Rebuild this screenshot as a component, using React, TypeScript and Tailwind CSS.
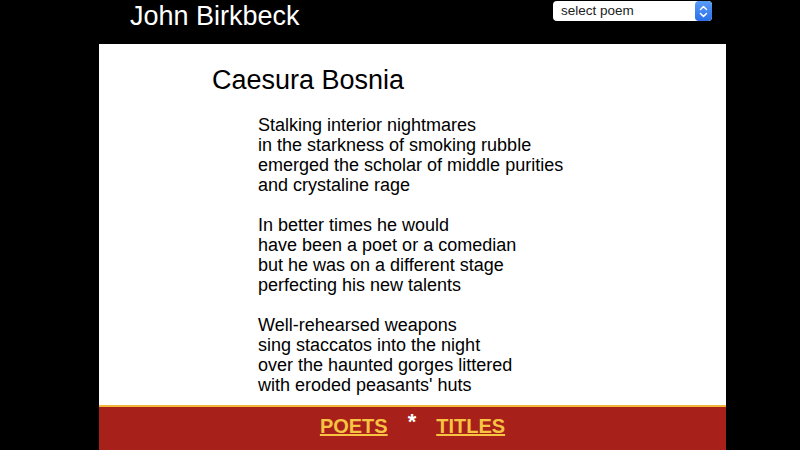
const STANZAS = [
  [
    "Stalking interior nightmares",
    "in the starkness of smoking rubble",
    "emerged the scholar of middle purities",
    "and crystaline rage",
  ],
  [
    "In better times he would",
    "have been a poet or a comedian",
    "but he was on a different stage",
    "perfecting his new talents",
  ],
  [
    "Well-rehearsed weapons",
    "sing staccatos into the night",
    "over the haunted gorges littered",
    "with eroded peasants' huts",
  ],
];

function PoemSelect() {
  return (
    <div className="flex h-5 w-[159px] items-stretch overflow-hidden rounded-[4px] bg-white">
      <span className="flex-1 pl-2 text-[13.5px] leading-5 text-[#222]">select poem</span>
      <span className="flex w-[17px] items-center justify-center rounded-[4px] bg-gradient-to-b from-[#5a9cf8] to-[#2a6fe8]">
        <svg width="9" height="13" viewBox="0 0 9 13" fill="none" stroke="white" strokeWidth="1.5" strokeLinecap="round" strokeLinejoin="round">
          <path d="M1.5 4.5 4.5 1.5 7.5 4.5" />
          <path d="M1.5 8.5 4.5 11.5 7.5 8.5" />
        </svg>
      </span>
    </div>
  );
}

export default function App() {
  return (
    <div className="h-[450px] overflow-hidden bg-black font-['Liberation_Sans',Arial,sans-serif]">
      <header className="flex h-[44px] items-start justify-between pl-[130px] pr-[88px]">
        <h1 className="pt-[1px] text-[27px] leading-[30px] text-white">John Birkbeck</h1>
        <div className="pt-[1px]">
          <PoemSelect />
        </div>
      </header>

      <main className="ml-[99px] w-[627px] bg-white">
        <section className="h-[361px] pt-[20px]">
          <h2 className="pl-[113px] text-[27px] leading-[32px] text-black">Caesura Bosnia</h2>
          <div className="mt-[19px] flex flex-col gap-[20px] pl-[159px]">
            {STANZAS.map((stanza, i) => (
              <p key={i} className="text-[18px] leading-[20px] text-black">
                {stanza.map((line) => (
                  <span key={line} className="block">
                    {line}
                  </span>
                ))}
              </p>
            ))}
          </div>
        </section>

        <footer className="h-[45px] border-t-2 border-[#f3b73a] bg-[#a8201a]">
          <nav className="flex items-start justify-center gap-[20px] pt-[7px] text-[20px] font-bold leading-6">
            <a href="#poets" className="text-[#f6c343] underline">POETS</a>
            <span className="-mt-[4px] text-[22px] text-white">*</span>
            <a href="#titles" className="text-[#f6c343] underline">TITLES</a>
          </nav>
        </footer>
      </main>
    </div>
  );
}
